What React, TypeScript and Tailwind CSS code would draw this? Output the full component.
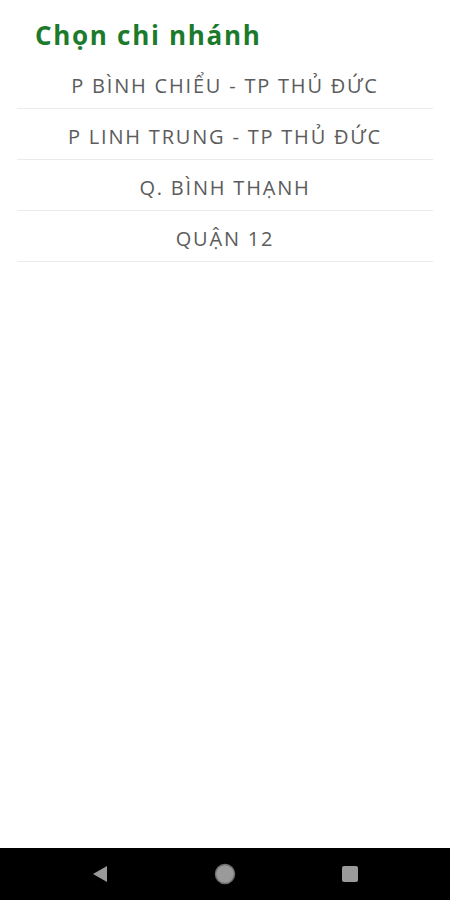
import React from 'react';

const branches = [
    'P BÌNH CHIỂU - TP THỦ ĐỨC',
    'P LINH TRUNG - TP THỦ ĐỨC',
    'Q. BÌNH THẠNH',
    'QUẬN 12',
];

export default function App() {
    return (
        <div className="w-[450px] h-[900px] flex flex-col bg-white font-['Open_Sans',sans-serif]">
            <div className="flex-1 px-[17px]">
                <h1 className="pl-[18px] pt-[17px] h-[58px] text-[26px] leading-[36px] font-bold text-[#1b7a2b] tracking-[1.7px]">
                    Chọn chi nhánh
                </h1>
                <ul>
                    {branches.map((name) => (
                        <li
                            key={name}
                            className="h-[51px] flex items-center justify-center pt-[5px] border-b border-[#ebebeb] text-[20px] text-[#5c5c5c] tracking-[1.8px]"
                        >
                            {name}
                        </li>
                    ))}
                </ul>
            </div>
            {/* system nav bar */}
            <div className="h-[52px] bg-black flex items-center justify-between px-[90px]">
                <svg width="20" height="20" viewBox="0 0 20 20">
                    <path d="M17 2 L17 18 L3 10 Z" fill="#9a9a9a" />
                </svg>
                <svg width="24" height="24" viewBox="0 0 24 24">
                    <circle cx="12" cy="12" r="9.5" fill="#9a9a9a" stroke="#6f6f6f" strokeWidth="1.5" />
                </svg>
                <svg width="20" height="20" viewBox="0 0 20 20">
                    <rect x="2" y="2" width="16" height="16" rx="2" fill="#9a9a9a" />
                </svg>
            </div>
        </div>
    );
}
